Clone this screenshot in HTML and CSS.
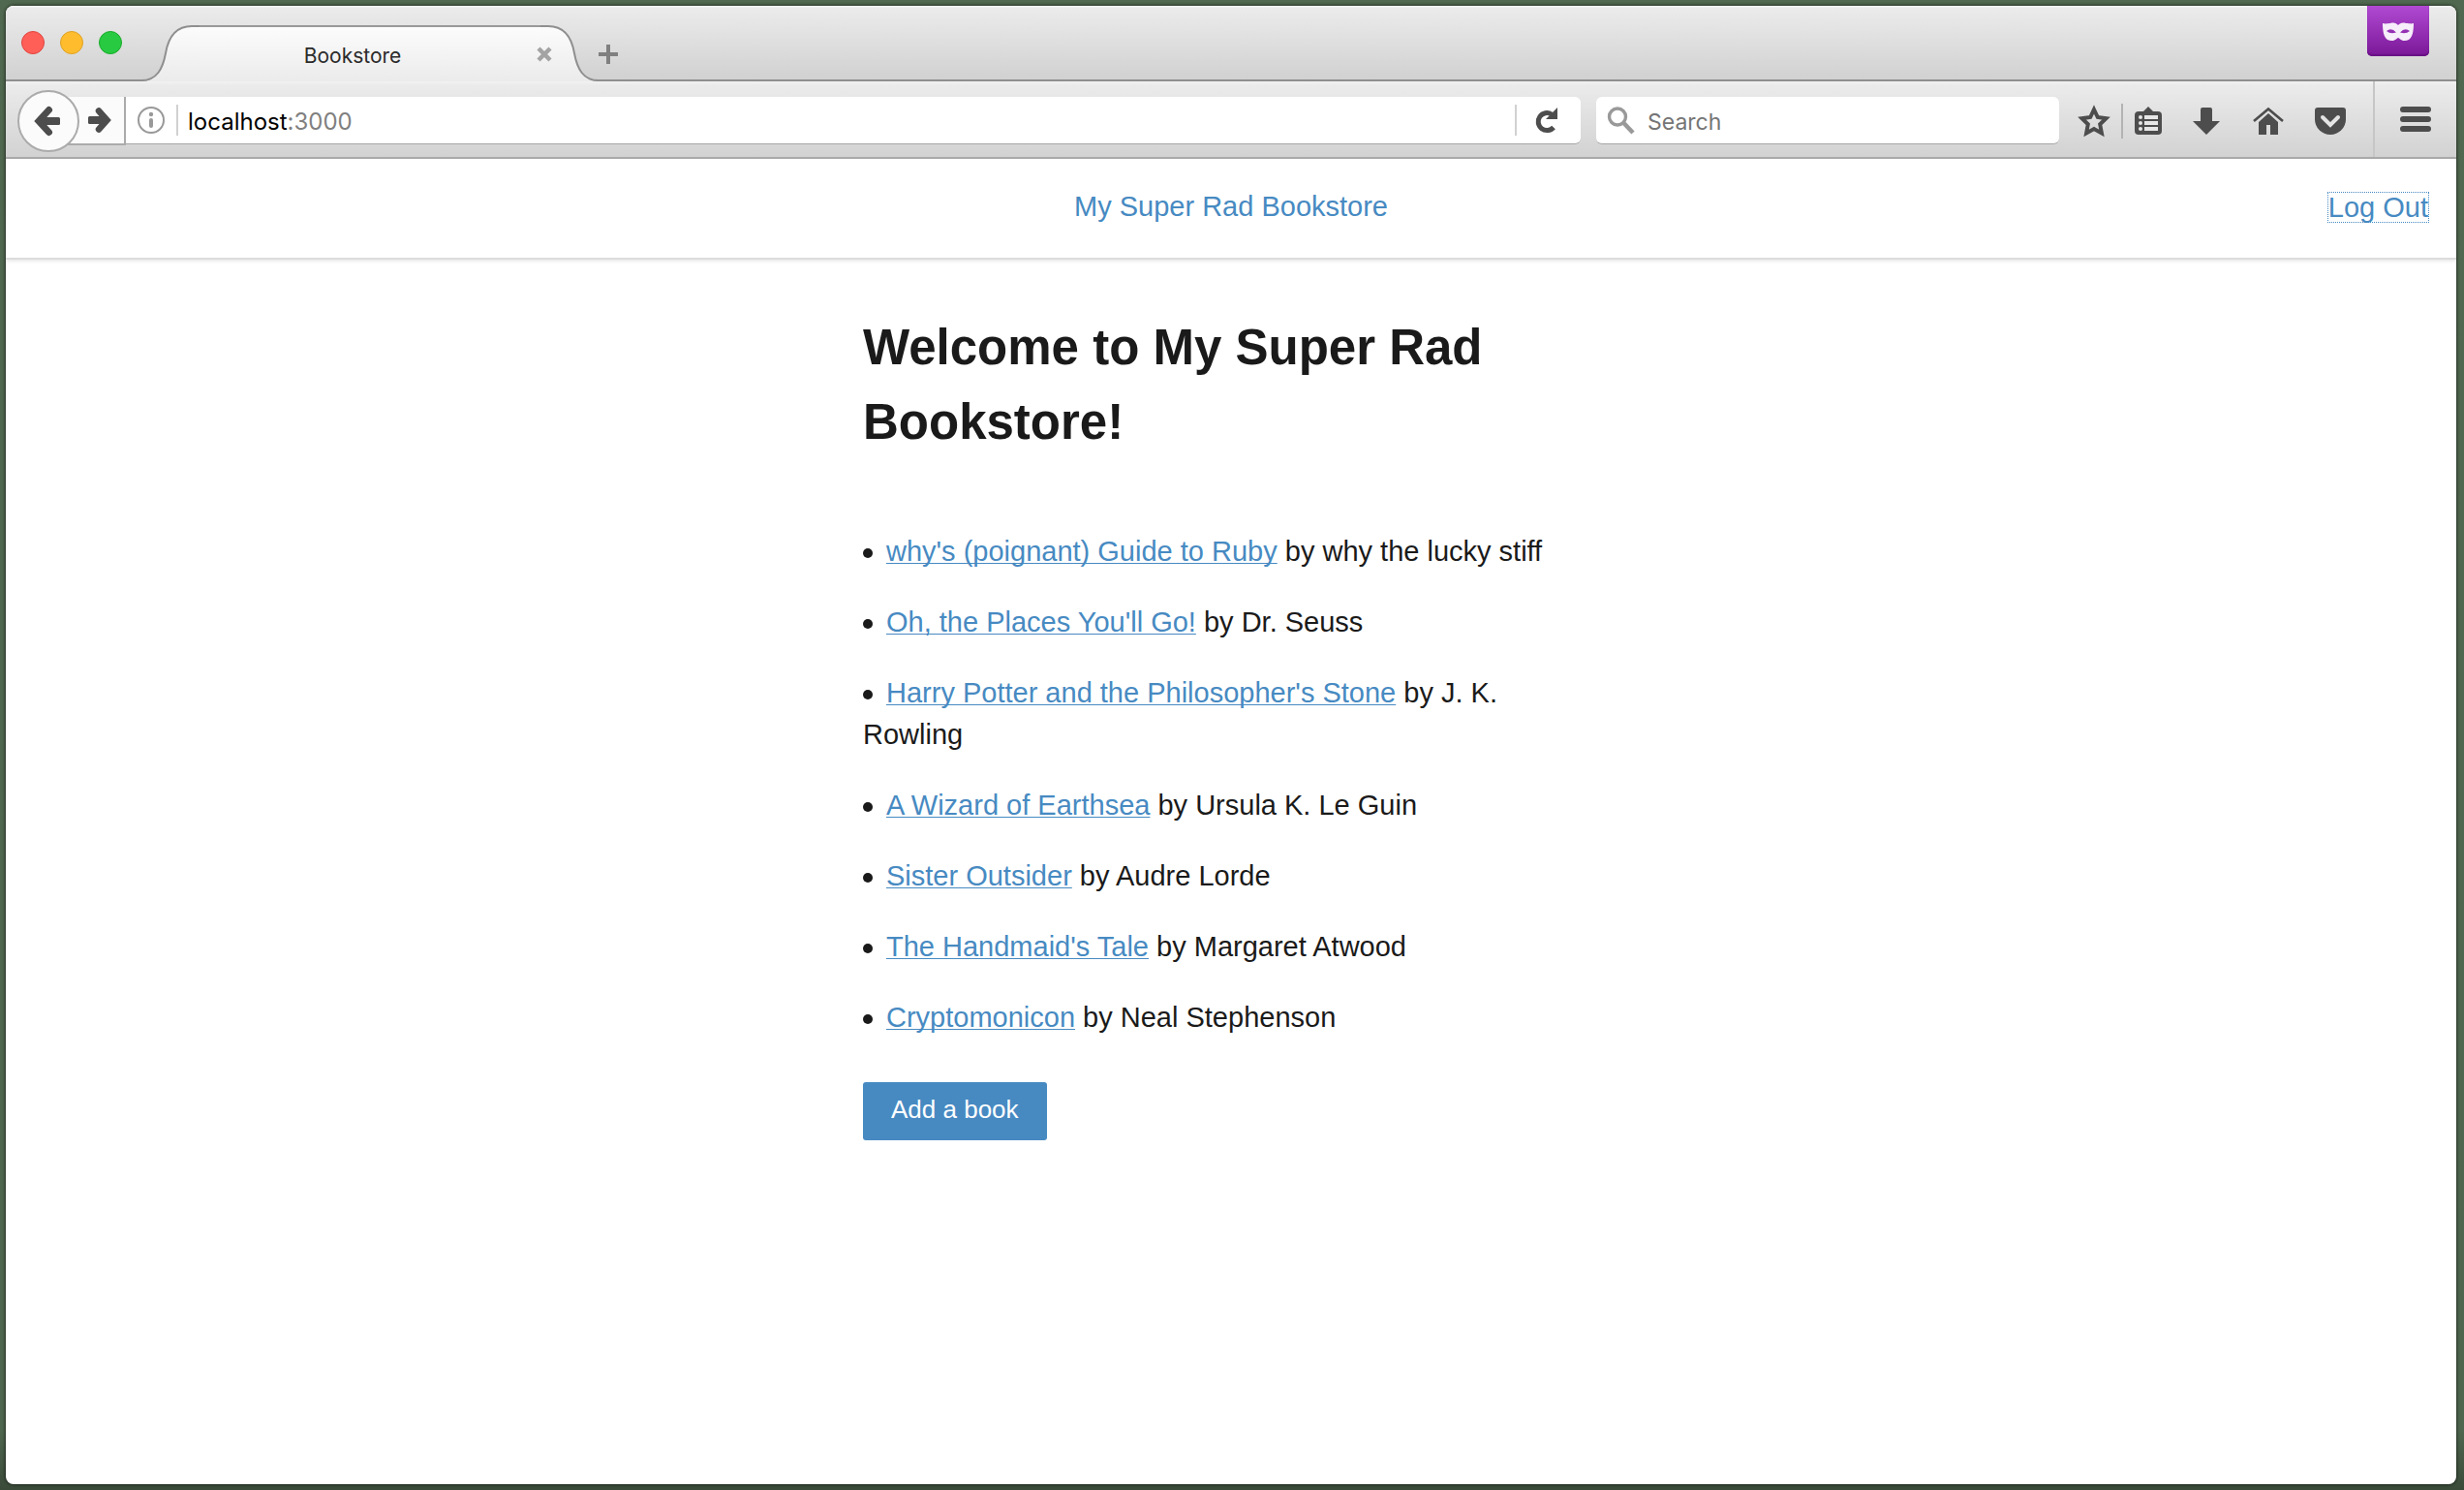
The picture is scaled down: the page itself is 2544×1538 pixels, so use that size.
FILE: index.html
```html
<!DOCTYPE html>
<html lang="en">
<head>
<meta charset="utf-8">
<title>Bookstore</title>
<link rel="stylesheet" href="styles.css">
</head>
<body>
<div class="window">
  <div class="tab-strip">
    <div class="lights">
      <button class="light light-close" aria-label="Close window"></button>
      <button class="light light-minimize" aria-label="Minimize window"></button>
      <button class="light light-zoom" aria-label="Zoom window"></button>
    </div>
    <div class="tab">
      <svg class="tab-edge" width="60" height="58" viewBox="0 0 60 58" aria-hidden="true">
        <defs><linearGradient id="tab-fill" x1="0" y1="0" x2="0" y2="1"><stop offset="0" stop-color="#fcfcfc"/><stop offset="1" stop-color="#ebebeb"/></linearGradient></defs>
        <path d="M0 58C16 58 22 45 25 29C28 11 36 1 52 1H60V58Z" fill="url(#tab-fill)"/>
        <path d="M0 57C16 57 22 45 25 29C28 11 36 1 52 1H60" fill="none" stroke="#8f8f8f" stroke-width="2"/>
      </svg>
      <div class="tab-body">
        <span class="tab-title">Bookstore</span>
        <button class="tab-close" aria-label="Close tab">
          <svg width="16" height="16" viewBox="0 0 16 16"><path d="M2 2L14 14M14 2L2 14" stroke="#a3a3a3" stroke-width="4.500"/></svg>
        </button>
      </div>
      <svg class="tab-edge" width="60" height="58" viewBox="0 0 60 58" aria-hidden="true">
        <path d="M60 58C44 58 38 45 35 29C32 11 24 1 8 1H0V58Z" fill="url(#tab-fill)"/>
        <path d="M60 57C44 57 38 45 35 29C32 11 24 1 8 1H0" fill="none" stroke="#8f8f8f" stroke-width="2"/>
      </svg>
    </div>
    <button class="new-tab" aria-label="New tab">
      <svg width="20" height="20" viewBox="0 0 20 20"><path d="M10 0V20M0 10H20" stroke="#808080" stroke-width="4"/></svg>
    </button>
    <div class="private-badge">
      <svg width="32" height="20" viewBox="0 0 32 20"><path fill="#f6eefa" fill-rule="evenodd" d="M0 1C3 2 5 1 8 1C12 0 14 1 16 3C18 1 20 0 24 1C27 1 29 2 32 1C32 9 31 15 27 18C23 20 19 19 17 16.500Q16 15.500 15 16.500C13 19 9 20 5 18C1 15 0 9 0 1ZM4 9Q9 5 14 10.500Q8 12.500 4 9ZM28 9Q23 5 18 10.500Q24 12.500 28 9Z"/></svg>
    </div>
  </div>

  <div class="toolbar">
    <div class="nav">
      <button class="back" aria-label="Back">
        <svg width="28" height="32" viewBox="0 0 28 32"><path d="M14.500 4.500L4 16L14.500 27.500" fill="none" stroke="#4d4d4d" stroke-width="7" stroke-linecap="round"/><rect x="4" y="12" width="22" height="8" rx="1.500" fill="#4d4d4d"/></svg>
      </button>
      <button class="forward" aria-label="Forward">
        <svg width="24" height="28" viewBox="0 0 24 28"><path d="M11 4.500L19.500 14L11 23.500" fill="none" stroke="#4d4d4d" stroke-width="6.500" stroke-linecap="round"/><rect x="0" y="10" width="20" height="8" rx="1.500" fill="#4d4d4d"/></svg>
      </button>
    </div>
    <div class="url-field">
      <svg class="info" width="28" height="28" viewBox="0 0 28 28"><circle cx="14" cy="14" r="13" fill="none" stroke="#999" stroke-width="2"/><circle cx="14" cy="8" r="2.200" fill="#999"/><path d="M14 14V20" stroke="#999" stroke-width="4" stroke-linecap="round"/></svg>
      <span class="field-rule"></span>
      <div class="address">localhost<span class="port">:3000</span></div>
      <span class="field-rule"></span>
      <button class="reload" aria-label="Reload">
        <svg width="22" height="26" viewBox="0 0 22 26"><path d="M16 7A9 9 0 1 0 18 20.500" fill="none" stroke="#4d4d4d" stroke-width="5"/><path d="M22 0V12H10Z" fill="#4d4d4d"/></svg>
      </button>
    </div>
    <label class="search-field">
      <svg width="28" height="28" viewBox="0 0 28 28" aria-hidden="true"><circle cx="10" cy="10.500" r="8.500" fill="none" stroke="#999" stroke-width="3.400"/><path d="M16 16.500L26 27" stroke="#999" stroke-width="4.500"/></svg>
      <input class="search-input" type="text" placeholder="Search" aria-label="Search">
    </label>
    <div class="actions">
      <button class="tool" aria-label="Bookmark this page">
        <svg width="32" height="32" viewBox="0 0 32 32"><path d="M16 4L19.800 12L28.500 13.200L22.200 19.300L23.900 28.500L16 24L8.100 28.500L9.800 19.300L3.500 13.200L12.200 12Z" fill="none" stroke="#4d4d4d" stroke-width="4"/></svg>
      </button>
      <span class="action-rule"></span>
      <button class="tool" aria-label="Bookmarks">
        <svg width="28" height="32" viewBox="0 0 28 32"><path d="M9 6L14 1L19 6Z" fill="#4d4d4d"/><rect y="6" width="28" height="24" rx="4" fill="#4d4d4d"/><g fill="#e6e6e6"><circle cx="6" cy="12" r="2"/><circle cx="6" cy="18" r="2"/><circle cx="6" cy="24" r="2"/><path d="M10 10H24V14H10ZM10 16H24V20H10ZM10 22H24V26H10Z"/></g></svg>
      </button>
      <button class="tool" aria-label="Downloads">
        <svg width="28" height="28" viewBox="0 0 28 28"><path d="M8 2Q8 0 10 0H18Q20 0 20 2V14H28L14 28L0 14H8Z" fill="#4d4d4d"/></svg>
      </button>
      <button class="tool" aria-label="Home">
        <svg width="34" height="28" viewBox="-2 0 34 28"><path d="M1 14L16 1.500L31 14" fill="none" stroke="#4d4d4d" stroke-width="2.600"/><path d="M16 6L26 15V28H18V18H14V28H6V15Z" fill="#4d4d4d"/></svg>
      </button>
      <button class="tool" aria-label="Save to Pocket">
        <svg width="32" height="28" viewBox="0 0 32 28"><path d="M3 0H29Q32 0 32 3V12A16 16 0 0 1 0 12V3Q0 0 3 0Z" fill="#4d4d4d"/><path d="M8 10L16 18L24 10" fill="none" stroke="#e4e4e4" stroke-width="4" stroke-linecap="round"/></svg>
      </button>
    </div>
    <button class="menu" aria-label="Menu">
      <svg width="32" height="26" viewBox="0 0 32 26"><path d="M3 3H29M3 13H29M3 23H29" stroke="#4d4d4d" stroke-width="6" stroke-linecap="round"/></svg>
    </button>
  </div>

  <header class="site-header">
    <a class="brand" href="#">My Super Rad Bookstore</a>
    <a class="log-out" href="#">Log Out</a>
  </header>
  <main class="content">
    <h1 class="title">Welcome to My Super Rad Bookstore!</h1>
    <ul class="books">
      <li><a class="book" href="#">why's (poignant) Guide to Ruby</a> by why the lucky stiff</li>
      <li><a class="book" href="#">Oh, the Places You'll Go!</a> by Dr. Seuss</li>
      <li><a class="book" href="#">Harry Potter and the Philosopher's Stone</a> by J. K. Rowling</li>
      <li><a class="book" href="#">A Wizard of Earthsea</a> by Ursula K. Le Guin</li>
      <li><a class="book" href="#">Sister Outsider</a> by Audre Lorde</li>
      <li><a class="book" href="#">The Handmaid's Tale</a> by Margaret Atwood</li>
      <li><a class="book" href="#">Cryptomonicon</a> by Neal Stephenson</li>
    </ul>
    <button class="add-book">Add a book</button>
  </main>
</div>
</body>
</html>
```
FILE: styles.css
```css
* {
  box-sizing: border-box;
}

body {
  display: flex;
  min-height: 100vh;
  margin: 0;
  padding: 6px 8px 6px 6px;
  background: linear-gradient(#50684f, #4f664e 96%, #3a4b39);
  color: #1a1a1a;
  font: 29px/43px "Liberation Sans", Arial, sans-serif;
}

button {
  padding: 0;
  border: 0;
  background: none;
  font: inherit;
}

svg {
  display: block;
  flex: none;
  overflow: visible;
}

a {
  color: #478ac2;
  text-decoration: none;
}

.window {
  flex: 1;
  min-width: 0;
  overflow: hidden;
  border-radius: 8px;
  background: #fff;
  box-shadow: 0 0 3px 1px rgba(0, 0, 0, 0.5);
}

/* Tab strip */

.tab-strip {
  display: flex;
  align-items: flex-end;
  height: 78px;
  border-bottom: 2px solid #8f8f8f;
  background: linear-gradient(#fff, #ebebeb 2px, #d1d1d1);
  font: 21px/28px Inter, sans-serif;
}

.lights {
  display: flex;
  gap: 16px;
  padding: 0 20px 26px 16px;
}

.light {
  width: 24px;
  height: 24px;
  border: 1px solid #e0443e;
  border-radius: 50%;
  background: #ff5f57;
}

.light-minimize {
  border-color: #dea123;
  background: #ffbd2e;
}

.light-zoom {
  border-color: #1aab29;
  background: #28ca42;
}

.tab {
  display: flex;
  width: 472px;
  margin-bottom: -2px;
}

.tab-edge {
  flex: none;
}

.tab-body {
  z-index: 1;
  display: flex;
  flex: 1;
  align-items: center;
  height: 58px;
  border-top: 2px solid #999;
  background: linear-gradient(#fcfcfc, #ebebeb);
  color: #2b2b2b;
}

.tab-title {
  flex: 1;
  padding: 3px 32px 0 0;
  text-align: center;
}

.tab-close {
  margin-right: -12px;
}

.new-tab {
  margin: 0 auto 16px 0;
}

.private-badge {
  display: flex;
  align-self: flex-start;
  align-items: center;
  justify-content: center;
  width: 64px;
  height: 52px;
  padding-top: 2px;
  margin-right: 28px;
  border-radius: 0 0 5px 5px;
  background: linear-gradient(#b14ad3, #7a1797);
  box-shadow: inset 0 -2px 1px #6a1185;
}

/* Navigation toolbar */

.toolbar {
  display: flex;
  align-items: center;
  height: 80px;
  padding: 3px 0 0 12px;
  border-bottom: 2px solid #adadad;
  background: linear-gradient(#f2f2f2, #ebebeb 4px, #d2d2d2);
  color: #000;
  font: 23px/48px Inter, sans-serif;
}

.nav {
  display: flex;
  align-items: center;
}

.back {
  z-index: 1;
  display: grid;
  place-items: center;
  width: 64px;
  height: 64px;
  border: 2px solid #ababab;
  border-radius: 50%;
  background: #fbfbfb;
}

.forward {
  display: flex;
  align-items: center;
  height: 50px;
  margin-left: -14px;
  padding: 0 13px 0 23px;
  border-right: 2px solid #ababab;
  border-bottom: 2px solid #ababab;
  background: #fbfbfb;
}

.url-field,
.search-field {
  display: flex;
  align-items: center;
  height: 49px;
  border-bottom: 1px solid #a6a6a6;
  background: #fff;
}

.url-field {
  flex: 1;
  padding: 0 24px 0 12px;
  border-radius: 0 6px 6px 0;
}

.field-rule {
  width: 2px;
  height: 32px;
  background: #d1d1d1;
}

.info {
  margin-right: 12px;
}

.address {
  flex: 1;
  padding: 3px 0 0 10px;
  font-size: 24px;
}

.port {
  color: #808080;
}

.reload {
  margin-left: 20px;
}

.search-field {
  flex: 0 1 478px;
  gap: 13px;
  margin-left: 16px;
  padding: 0 12px;
  border-radius: 6px;
}

.search-input {
  flex: 1;
  min-width: 0;
  padding: 3px 0 0;
  border: 0;
  outline: 0;
  background: none;
  font: inherit;
}

.search-input::placeholder {
  color: #757575;
}

.actions {
  display: flex;
  align-items: center;
  gap: 32px;
  padding: 0 28px 0 20px;
}

.action-rule {
  width: 2px;
  height: 36px;
  margin: 0 -20px;
  background: #b3b3b3;
}

.menu {
  align-self: stretch;
  margin-top: -3px;
  padding: 0 26px;
  border-left: 2px solid #c6c6c6;
}

/* Bookstore page */

.site-header {
  display: grid;
  grid-template-columns: 1fr auto 1fr;
  padding: 28px 29px 31px;
  border-bottom: 2px solid #dcdcdc;
  box-shadow: 0 1px 4px rgba(0, 0, 0, 0.12);
}

.brand {
  grid-column: 2;
}

.log-out {
  justify-self: end;
  align-self: center;
  line-height: 30px;
  outline: 1px dotted #478ac2;
}

.content {
  max-width: 760px;
  margin: 0 auto;
  padding: 52px 0;
}

.title {
  margin: 0 0 74px;
  font-size: 51px;
  line-height: 77px;
}

.books {
  display: grid;
  gap: 30px;
  margin: 0 0 45px;
  padding: 0;
  list-style: none;
}

.books li::before {
  content: "";
  display: inline-block;
  width: 10px;
  height: 10px;
  margin-right: 14px;
  border-radius: 50%;
  background: #1a1a1a;
  vertical-align: 3px;
}

.book {
  text-decoration: underline 1px;
  text-underline-offset: 2px;
  text-decoration-skip-ink: none;
}

.add-book {
  padding: 7px 29px 10px;
  border-radius: 3px;
  background: #478ac2;
  color: #fff;
  font-size: 26px;
  line-height: 43px;
}
```
